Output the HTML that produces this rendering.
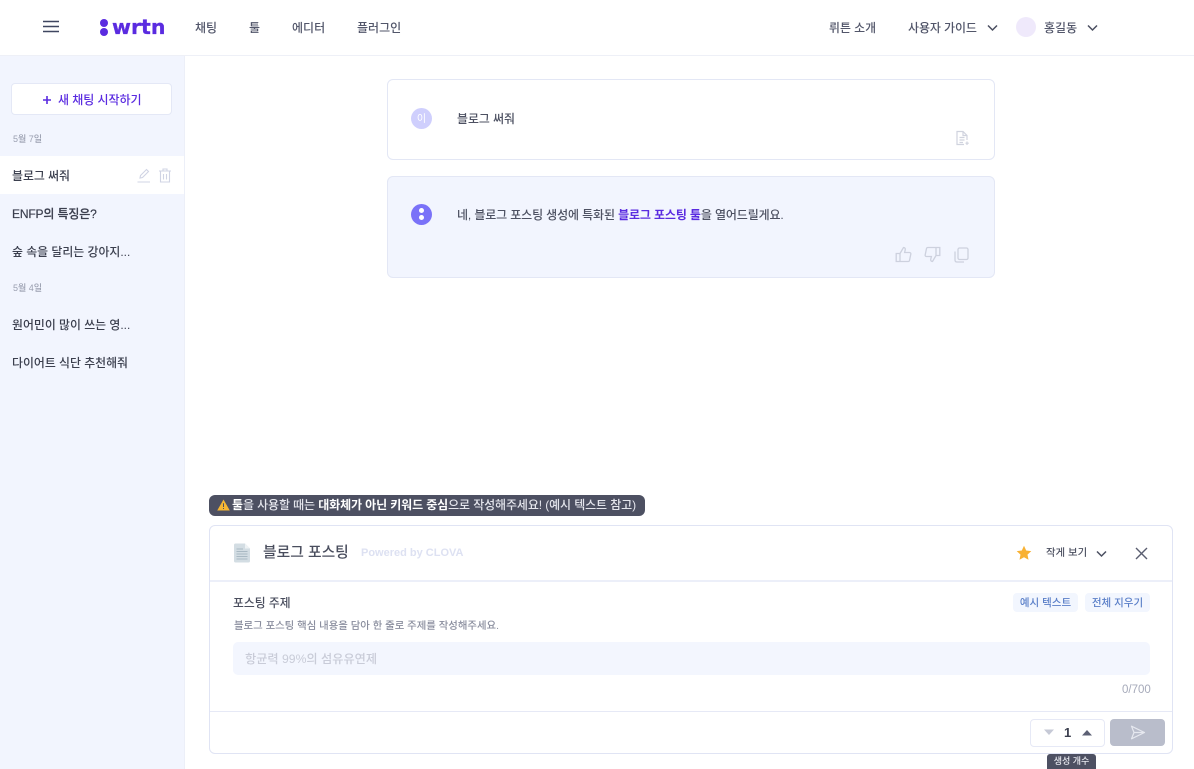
<!DOCTYPE html>
<html lang="ko"><head><meta charset="utf-8"><title>wrtn</title>
<style>
*{box-sizing:border-box}
html,body{margin:0;padding:0;background:#fff}
body{width:1194px;height:769px;position:relative;overflow:hidden;font-family:"Liberation Sans","Noto Sans CJK KR",sans-serif;color:#3b3f4e}
.a{position:absolute;white-space:nowrap}
.t{position:absolute;white-space:nowrap;line-height:20px;height:20px;font-weight:500}
svg{position:absolute;display:block}
</style></head><body>

<!-- sidebar -->
<div class="a" style="left:0;top:55px;width:185px;height:714px;background:#f2f5fe;border-right:1px solid #eceff8"></div>
<!-- header -->
<div class="a" style="left:0;top:0;width:1194px;height:56px;background:#fff;border-bottom:1.5px solid #eef0f7"></div>

<svg style="left:42px;top:20px" width="18" height="14" viewBox="0 0 18 14"><path d="M1 1.5H17M1 6.5H17M1 11.5H17" stroke="#3f4660" stroke-width="1.4" fill="none"/></svg>
<svg style="left:99px;top:18px" width="10" height="19" viewBox="0 0 10 19"><circle cx="5" cy="5" r="4" fill="#5a2be0"/><circle cx="5" cy="14" r="4" fill="#5a2be0"/></svg>
<div class="t" style="left:112px;top:15px;font-family:'DejaVu Sans',sans-serif;font-size:20.5px;line-height:24px;height:24px;font-weight:700;color:#5a2be0;-webkit-text-stroke:.3px #5a2be0">wrtn</div>

<div class="t" style="left:195px;top:18px;font-size:12px;color:#52566a">채팅</div>
<div class="t" style="left:249px;top:18px;font-size:12px;color:#52566a">툴</div>
<div class="t" style="left:292px;top:18px;font-size:12px;color:#52566a">에디터</div>
<div class="t" style="left:357px;top:18px;font-size:12px;color:#52566a">플러그인</div>

<div class="t" style="left:829px;top:18px;font-size:11.9px;color:#52566a">뤼튼 소개</div>
<div class="t" style="left:908px;top:18px;font-size:12px;letter-spacing:-.1px;color:#52566a">사용자 가이드</div>
<svg style="left:987px;top:24px" width="11" height="8" viewBox="0 0 11 8"><path d="M1 1.5L5.5 6L10 1.5" stroke="#4a4e60" stroke-width="1.5" fill="none"/></svg>
<div class="a" style="left:1016px;top:17px;width:20px;height:20px;border-radius:50%;background:#efe9fb"></div>
<div class="t" style="left:1044px;top:18px;font-size:12px;color:#52566a">홍길동</div>
<svg style="left:1087px;top:24px" width="11" height="8" viewBox="0 0 11 8"><path d="M1 1.5L5.5 6L10 1.5" stroke="#4a4e60" stroke-width="1.5" fill="none"/></svg>

<!-- sidebar content -->
<div class="a" style="left:11px;top:83px;width:161px;height:32px;background:#fff;border:1px solid #e4e8f6;border-radius:4px"></div>
<svg style="left:42px;top:95px" width="10" height="10" viewBox="0 0 10 10"><path d="M5 1V9M1 5H9" stroke="#5a2be0" stroke-width="1.6" fill="none"/></svg>
<div class="t" style="left:58px;top:90px;font-size:12px;letter-spacing:-.05px;color:#5a2be0">새 채팅 시작하기</div>
<div class="t" style="left:13px;top:129px;font-size:9px;color:#9a9fb0">5월 7일</div>
<div class="a" style="left:0;top:156px;width:184px;height:38px;background:#fff"></div>
<div class="t" style="left:12px;top:166px;font-size:11.9px;color:#3b3f4e">블로그 써줘</div>
<svg style="left:137px;top:168px" width="14" height="15" viewBox="0 0 14 15"><path d="M3 10L3.5 7.5L9.5 1.5L11.5 3.5L5.5 9.5ZM0.5 14H13" stroke="#d0d4e4" stroke-width="1.1" fill="none"/></svg>
<svg style="left:158px;top:168px" width="14" height="15" viewBox="0 0 14 15"><path d="M1 3H13M5 3V1H9V3M2.5 3V14H11.5V3M5.5 6V11.5M8.5 6V11.5" stroke="#d0d4e4" stroke-width="1.1" fill="none"/></svg>
<div class="t" style="left:12px;top:204px;font-size:12px;letter-spacing:-.15px;-webkit-text-stroke:.2px #3b3f4e;color:#3b3f4e">ENFP의 특징은?</div>
<div class="t" style="left:12px;top:242px;font-size:11.9px;color:#3b3f4e">숲 속을 달리는 강아지...</div>
<div class="t" style="left:13px;top:278px;font-size:9px;color:#9a9fb0">5월 4일</div>
<div class="t" style="left:12px;top:315px;font-size:11.9px;color:#3b3f4e">원어민이 많이 쓰는 영...</div>
<div class="t" style="left:12px;top:353px;font-size:11.9px;color:#3b3f4e">다이어트 식단 추천해줘</div>

<!-- chat cards -->
<div class="a" style="left:387px;top:79px;width:608px;height:81px;background:#fff;border:1px solid #e3e7f5;border-radius:6px"></div>
<div class="a" style="left:411px;top:108px;width:21px;height:21px;border-radius:50%;background:#cfcffd;color:#fff;font-size:10px;line-height:23px;text-align:center">이</div>
<div class="t" style="left:457px;top:109px;font-size:11.9px;color:#4d5162">블로그 써줘</div>
<svg style="left:955px;top:130px" width="15" height="16" viewBox="0 0 15 16"><path d="M9 14.5H2V1.5H8L12 5.5V10M8 1.5V5.5H12M4.5 7.5H9.5M4.5 10H9.5M4.5 12.5H8M12 11.5V15M10.5 13.2H13.8" stroke="#d0d3de" stroke-width="1.2" fill="none"/></svg>

<div class="a" style="left:387px;top:176px;width:608px;height:102px;background:#f2f5fe;border:1px solid #e3e7f5;border-radius:6px"></div>
<div class="a" style="left:411px;top:204px;width:21px;height:21px;border-radius:50%;background:#7a72f8"></div>
<div class="a" style="left:419px;top:208px;width:5px;height:5px;border-radius:50%;background:#fff"></div>
<div class="a" style="left:419px;top:215px;width:5px;height:5px;border-radius:50%;background:#fff"></div>
<div class="t" style="left:457px;top:205px;font-size:12px;letter-spacing:-.13px;color:#4d5162">네, 블로그 포스팅 생성에 특화된 <b style="color:#5a2be0;font-weight:700">블로그 포스팅 툴</b>을 열어드릴게요.</div>
<svg style="left:895px;top:246px" width="17" height="17" viewBox="0 0 17 17"><path d="M5 7.5V15.5H1.2V7.5ZM5 7.5L8.5 1.5C10 1.5 10.5 2.7 10.2 4L9.6 6.5H14.5C15.5 6.5 16 7.3 15.8 8.2L14.5 14.5C14.3 15.2 13.8 15.5 13.2 15.5H5" stroke="#cdd1de" stroke-width="1.3" fill="none"/></svg>
<svg style="left:924px;top:246px" width="17" height="17" viewBox="0 0 17 17"><path d="M12 9.5V1.5H15.8V9.5ZM12 9.5L8.5 15.5C7 15.5 6.5 14.3 6.8 13L7.4 10.5H2.5C1.5 10.5 1 9.7 1.2 8.8L2.5 2.5C2.7 1.8 3.2 1.5 3.8 1.5H12" stroke="#cdd1de" stroke-width="1.3" fill="none"/></svg>
<svg style="left:954px;top:247px" width="15" height="16" viewBox="0 0 15 16"><rect x="4" y="1" width="10" height="11.5" rx="1.5" stroke="#cdd1de" stroke-width="1.3" fill="none"/><path d="M1 4.5V13C1 14.2 1.8 15 3 15H10" stroke="#cdd1de" stroke-width="1.3" fill="none"/></svg>

<!-- notice -->
<div class="a" style="left:209px;top:495px;width:436px;height:21px;background:#4d5062;border-radius:6px"></div>
<svg style="left:217px;top:499px" width="13" height="12" viewBox="0 0 13 12"><path d="M6.5 .5L12.8 11.5H.2Z" fill="#f7b733"/><path d="M6.5 4.2V8M6.5 9V10" stroke="#4d5062" stroke-width="1"/></svg>
<div class="t" style="left:232px;top:495px;font-size:12px;letter-spacing:-.11px;line-height:20px;color:#e4e5ec"><b style="color:#fff;font-weight:700">툴</b>을 사용할 때는 <b style="color:#fff;font-weight:700">대화체가 아닌 키워드 중심</b>으로 작성해주세요! (예시 텍스트 참고)</div>

<!-- tool panel -->
<div class="a" style="left:209px;top:525px;width:964px;height:229px;background:#fff;border:1px solid #e0e4f4;border-radius:6px"></div>
<div class="a" style="left:210px;top:580px;width:962px;height:1.5px;background:#eceff9"></div>
<div class="a" style="left:210px;top:711px;width:962px;height:1px;background:#e6e9f6"></div>
<svg style="left:233px;top:543px" width="18" height="20" viewBox="0 0 18 20"><path d="M1 2C1 1 1.6 .5 2.5 .5H12L17 5.5V18C17 19 16.4 19.5 15.5 19.5H2.5C1.6 19.5 1 19 1 18Z" fill="#d3dde3"/><path d="M12 .5V5.5H17Z" fill="#eef2f4"/><path d="M3.5 6H10M3.5 8.5H14.5M3.5 11H14.5M3.5 13.5H14.5M3.5 16H14.5" stroke="#a9b9c3" stroke-width="1.1"/></svg>
<div class="t" style="left:263px;top:543px;font-size:14.8px;color:#4a4e5e">블로그 포스팅</div>
<div class="t" style="left:361px;top:543px;font-size:11px;font-weight:700;color:#dde1f2">Powered by CLOVA</div>
<svg style="left:1016px;top:545px" width="16" height="16" viewBox="0 0 16 16"><path d="M8 .8L10.2 5.5L15.3 6.1L11.5 9.6L12.5 14.8L8 12.2L3.5 14.8L4.5 9.6L.7 6.1L5.8 5.5Z" fill="#f8b133"/></svg>
<div class="t" style="left:1046px;top:544px;font-size:10.4px;color:#4d5162">작게 보기</div>
<svg style="left:1096px;top:550px" width="11" height="8" viewBox="0 0 11 8"><path d="M1 1.5L5.5 6L10 1.5" stroke="#4a4e60" stroke-width="1.5" fill="none"/></svg>
<svg style="left:1135px;top:547px" width="13" height="13" viewBox="0 0 13 13"><path d="M1 1L12 12M12 1L1 12" stroke="#5a5e70" stroke-width="1.4" fill="none"/></svg>

<div class="t" style="left:233px;top:593px;font-size:11.8px;color:#4a4e5e">포스팅 주제</div>
<div class="a" style="left:1013px;top:593px;width:65px;height:19px;background:#f2f6fe;border-radius:4px;color:#5a7fc8;font-size:10.5px;font-weight:500;line-height:20px;text-align:center">예시 텍스트</div>
<div class="a" style="left:1085px;top:593px;width:65px;height:19px;background:#f2f6fe;border-radius:4px;color:#5a7fc8;font-size:10.5px;font-weight:500;line-height:20px;text-align:center">전체 지우기</div>
<div class="t" style="left:234px;top:617px;font-size:10.4px;color:#8a8e9e">블로그 포스팅 핵심 내용을 담아 한 줄로 주제를 작성해주세요.</div>
<div class="a" style="left:233px;top:642px;width:917px;height:33px;background:#f3f6fe;border-radius:5px"></div>
<div class="t" style="left:245px;top:649px;font-size:12.2px;color:#c9ccd8">항균력 99%의 섬유유연제</div>
<div class="t" style="left:1122px;top:680px;font-size:11.5px;color:#a6aaba">0/700</div>

<div class="a" style="left:1030px;top:719px;width:75px;height:28px;background:#fff;border:1px solid #e6e9f6;border-radius:4px"></div>
<svg style="left:1043px;top:729px" width="12" height="7" viewBox="0 0 12 7"><path d="M1 .5H11L6 6Z" fill="#c6c9d6"/></svg>
<div class="t" style="left:1064px;top:723px;font-size:13px;font-weight:700;color:#3b3f4e">1</div>
<svg style="left:1081px;top:729px" width="12" height="7" viewBox="0 0 12 7"><path d="M1 6.5H11L6 1Z" fill="#5c6074"/></svg>
<div class="a" style="left:1110px;top:719px;width:55px;height:27px;background:#b9bdcb;border-radius:4px"></div>
<svg style="left:1130px;top:725px" width="16" height="15" viewBox="0 0 16 15"><path d="M1.5 1.2L14.5 7.5L1.5 13.8L4 7.5ZM4 7.5H14.5" stroke="#e6e8ef" stroke-width="1.2" fill="none" stroke-linejoin="round"/></svg>
<div class="a" style="left:1047px;top:754px;width:49px;height:15px;background:#4d5062;border-radius:3px 3px 0 0;color:#e9eaf0;font-size:9px;font-weight:500;line-height:15px;text-align:center">생성 개수</div>

</body></html>
